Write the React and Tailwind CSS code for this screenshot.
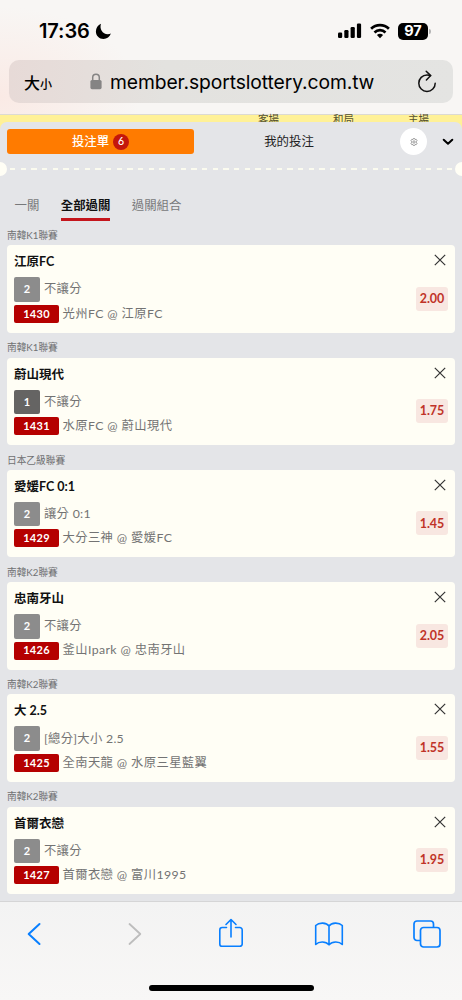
import React, { useState } from "react";

const initialBets = [
  { id: "1430", league: "南韓K1聯賽", title: "江原FC", pick: "2", type: "不讓分", match: "光州FC @ 江原FC", odds: "2.00" },
  { id: "1431", league: "南韓K1聯賽", title: "蔚山現代", pick: "1", type: "不讓分", match: "水原FC @ 蔚山現代", odds: "1.75" },
  { id: "1429", league: "日本乙級聯賽", title: "愛媛FC 0:1", pick: "2", type: "讓分 0:1", match: "大分三神 @ 愛媛FC", odds: "1.45" },
  { id: "1426", league: "南韓K2聯賽", title: "忠南牙山", pick: "2", type: "不讓分", match: "釜山Ipark @ 忠南牙山", odds: "2.05" },
  { id: "1425", league: "南韓K2聯賽", title: "大 2.5", pick: "2", type: "[總分]大小 2.5", match: "全南天龍 @ 水原三星藍翼", odds: "1.55" },
  { id: "1427", league: "南韓K2聯賽", title: "首爾衣戀", pick: "2", type: "不讓分", match: "首爾衣戀 @ 富川1995", odds: "1.95" },
];

const tabs = ["一關", "全部過關", "過關組合"];

const StatusBar = () => (
  <div className="flex h-[60px] items-center pl-[39px] pr-[31px] pt-[2px] text-black">
    <span className="w-[53px] whitespace-nowrap text-[20px] font-semibold leading-none tracking-[-0.1px]">17:36</span>
    <svg className="ml-[3px]" width="17" height="17" viewBox="0 0 17 17">
      <path d="M6 .8C4.200 5.800 7.400 11.200 12.800 11.200c1.200 0 2.200-.2 3.100-.6C14.700 14 11.900 16 8.500 16 4.200 16 .900 12.800 .900 8.500 .900 5.100 2.900 2 6 .8Z" />
    </svg>
    <div className="ml-auto flex items-center">
      <svg width="24" height="16" viewBox="0 0 24 16">
        <rect x="0" y="9.500" width="4.200" height="5.500" rx="1.200" />
        <rect x="6.300" y="7" width="4.200" height="8" rx="1.200" />
        <rect x="12.600" y="4" width="4.200" height="11" rx="1.200" />
        <rect x="18.900" y=".5" width="4.200" height="14.500" rx="1.200" />
      </svg>
      <svg className="ml-[8px]" width="20" height="16" viewBox="0 0 20 16">
        <g fill="none" stroke="#000" strokeWidth="2.700">
          <path d="M1.100 5.800a12.800 12.800 0 0 1 17.800 0" />
          <path d="M4.500 9.400a8 8 0 0 1 11 0" />
        </g>
        <path d="M10 15.200l-3.100-3.100a4.500 4.500 0 0 1 6.200 0Z" />
      </svg>
      <div className="ml-[8px] flex h-[17px] w-[30px] items-center justify-center rounded-[5px] bg-black text-[14.500px] font-bold leading-none text-white">
        97
      </div>
      <div className="ml-[1px] h-[5px] w-[2px] rounded-r-full bg-[#b5b5b5]"></div>
    </div>
  </div>
);

const AddressBar = () => (
  <div className="mx-[9px] flex h-[43px] items-center rounded-[10px] bg-linear-to-r from-[#e7dad7] via-[#e3e2df] via-35% to-[#e4e4e2] pl-[15px] pr-[16px] text-black">
    <div className="flex w-[65px] items-baseline font-['Noto_Sans_CJK_TC',sans-serif] font-medium leading-none">
      <span className="text-[16px]">大</span>
      <span className="text-[12px]">小</span>
    </div>
    <svg className="ml-[1px]" width="12" height="17" viewBox="0 0 12 17">
      <path d="M2.700 8V4.500a3.300 3.300 0 0 1 6.600 0V8" fill="none" stroke="#858484" strokeWidth="1.500" />
      <rect x=".4" y="7" width="11.200" height="9.200" rx="1.600" fill="#858484" />
    </svg>
    <span className="ml-[8px] whitespace-nowrap pt-[2px] text-[19.300px] leading-none tracking-[-0.100px]">member.sportslottery.com.tw</span>
    <svg className="ml-auto" width="20" height="24" viewBox="0 0 20 24" fill="none" stroke="#111" strokeWidth="1.500" strokeLinecap="round" strokeLinejoin="round">
      <path d="M18.200 13.200A8.200 8.200 0 1 1 10 5c1.400 0 2.600.2 3.600.7" />
      <path d="M9.200 1.300l4.500 4.300-4.300 4.400" />
    </svg>
  </div>
);

const BetCard = ({ bet, onRemove }) => (
  <section className="h-[112.300px] px-[7px]">
    <h3 className="h-[21.300px] whitespace-nowrap pt-[1px] text-[9.700px] leading-[21px] text-[#707173]">{bet.league}</h3>
    <div className="flex h-[87.400px] justify-between rounded-[4px] bg-[#fffef5] pl-[7px] pr-[7px]">
      <div className="whitespace-nowrap pt-[9px]">
        <h4 className="h-[16px] text-[12.500px] font-bold leading-[16px] text-[#111]">{bet.title}</h4>
        <div className="mt-[7px] flex h-[24.500px] items-center">
          <span
            className={`flex h-full w-[26px] items-center justify-center rounded-[2px] text-[11px] font-bold text-white ${
              bet.pick === "1" ? "bg-[#656463]" : "bg-[#8c8c8c]"
            }`}
          >
            {bet.pick}
          </span>
          <span className="ml-[4px] text-[12.300px] tracking-[0.300px] text-[#737373]">{bet.type}</span>
        </div>
        <div className="mt-[3px] flex h-[18px] items-center">
          <span className="flex h-full w-[45px] items-center justify-center rounded-[2px] bg-[#b50000] text-[11px] font-bold tracking-[0.300px] text-white">
            {bet.id}
          </span>
          <span className="ml-[3.500px] text-[12.300px] tracking-[0.400px] text-[#737373]">{bet.match}</span>
        </div>
      </div>
      <div className="flex w-[32px] flex-col items-end">
        <button className="mr-[2px] mt-[9px]" onClick={() => onRemove(bet.id)}>
          <svg width="12" height="12" viewBox="0 0 12 12" stroke="#333" strokeWidth="1.200">
            <path d="M.8 .8l10.400 10.400M11.200 .8L.8 11.200" />
          </svg>
        </button>
        <span className="mt-[20.500px] flex h-[24px] w-[32px] items-center justify-center rounded-[3px] bg-[#f8e7e1] pt-[1px] text-[12.500px] font-bold text-[#c03328]">
          {bet.odds}
        </span>
      </div>
    </div>
  </section>
);

const BottomBar = () => (
  <footer className="h-[99px] border-t border-[#d5d5d6] bg-linear-to-b from-[#f3f3f3] to-[#f8f7f6]">
    <div className="flex h-[63px] items-center pl-[27px] text-[#087fff]">
      <svg width="14" height="24" viewBox="0 0 14 24" fill="none" stroke="currentColor" strokeWidth="2" strokeLinecap="round" strokeLinejoin="round">
        <path d="M12.500 2L1.700 12l10.800 10" />
      </svg>
      <svg className="ml-[87px]" width="14" height="24" viewBox="0 0 14 24" fill="none" stroke="#bdbdbd" strokeWidth="1.800" strokeLinecap="round" strokeLinejoin="round">
        <path d="M1.500 2l10.800 10L1.500 22" />
      </svg>
      <svg className="mb-[1px] ml-[76px]" width="26" height="30" viewBox="0 0 26 30" fill="none" stroke="currentColor" strokeWidth="1.600" strokeLinecap="round" strokeLinejoin="round">
        <path d="M8.500 9.500H4.200a2.400 2.400 0 0 0-2.400 2.400v14a2.400 2.400 0 0 0 2.400 2.400h17.600a2.400 2.400 0 0 0 2.400-2.400v-14a2.400 2.400 0 0 0-2.400-2.400h-4.300" />
        <path d="M13 19V1.800M8 6.500l5-5 5 5" />
      </svg>
      <svg className="ml-[69.500px]" width="30" height="26" viewBox="0 0 30 26" fill="none" stroke="currentColor" strokeWidth="1.600" strokeLinejoin="round">
        <path d="M15 5C12.500 1.200 5 1.200 1.700 4.500v19c3.300-3.300 10-3.300 13.300.3 3.300-3.600 10-3.600 13.300-.3v-19C25 1.200 17.500 1.200 15 5ZM15 5v18.800" />
      </svg>
      <svg className="ml-[69px]" width="28" height="28" viewBox="0 0 28 28" fill="none" stroke="currentColor" strokeWidth="1.700" strokeLinejoin="round">
        <path d="M7.500 20.500H4a3 3 0 0 1-3-3V4a3 3 0 0 1 3-3h13.500a3 3 0 0 1 3 3v3.500" />
        <rect x="7.500" y="7.500" width="19.500" height="19.500" rx="3" />
      </svg>
    </div>
    <div className="mx-auto mt-[20px] h-[6px] w-[165px] rounded-full bg-black"></div>
  </footer>
);

const App = () => {
  const [bets, setBets] = useState(initialBets);
  const [activeTab, setActiveTab] = useState("全部過關");

  const removeBet = (id) => {
    setBets(bets.filter((bet) => bet.id !== id));
  };

  return (
    <div className="flex h-[1000px] w-[462px] flex-col overflow-hidden bg-[#e4e5e8] font-['Lato','Noto_Sans_CJK_TC',sans-serif]">
      <header className="h-[115px] shrink-0 border-b border-[#dcdad3] bg-[radial-gradient(ellipse_140px_90px_at_0%_85%,#faeae5,#f8f6f4)] font-['Inter',sans-serif]">
        <StatusBar />
        <AddressBar />
      </header>

      {/* odds table header, mostly covered by the bet slip panel */}
      <div className="h-[14px] shrink-0 bg-[#fff197] text-[10.500px] leading-none text-[#54502f]">
        <div className="ml-[231px] grid w-[225px] grid-cols-3 text-center">
          <span className="-mt-[1px]">客場</span>
          <span className="-mt-[1px]">和局</span>
          <span className="-mt-[1px]">主場</span>
        </div>
      </div>

      <main className="relative -mt-[7px] min-h-0 flex-1 overflow-hidden rounded-t-[7px] bg-[#e4e5e8]">
        <div className="flex h-[39px] items-center pl-[7px] pr-[8px]">
          <button className="flex h-[25px] w-[187px] items-center justify-center rounded-[3px] bg-[#ff7b00] text-[12.400px] font-medium text-white">
            <span className="pt-[1px]">投注單</span>
            <span className="ml-[4px] flex h-[16px] w-[16px] items-center justify-center rounded-full bg-[#c4170c] text-[10.500px]">6</span>
          </button>
          <button className="w-[190px] pt-[1px] text-[12.400px] text-[#222]">我的投注</button>
          <div className="ml-[16px] flex h-[27px] w-[27px] items-center justify-center rounded-full bg-white">
            <svg width="8" height="8" viewBox="0 0 8 8" fill="none" stroke="#777" strokeWidth=".7">
              <path d="M3.200 .6h1.600l.4 1 1.100-.2.8 1.400-.7.800v.8l.7.800-.8 1.400-1.100-.2-.4 1H3.200l-.4-1-1.100.2-.8-1.400.7-.8v-.8l-.7-.8.8-1.400 1.100.2Z" />
              <circle cx="4" cy="4" r="1.200" />
            </svg>
          </div>
          <svg className="ml-auto" width="12" height="8" viewBox="0 0 12 8" fill="none" stroke="#000" strokeWidth="2" strokeLinecap="round" strokeLinejoin="round">
            <path d="M1.700 1.700L6 5.800l4.300-4.100" />
          </svg>
        </div>

        <div className="flex h-[15px] items-center justify-between">
          <div className="h-[14px] w-[7px] rounded-r-full bg-[#fffef5]"></div>
          <div className="mt-[1px] h-[2px] w-[442px] bg-[repeating-linear-gradient(to_right,#fbfbef_0px,#fbfbef_5.3px,transparent_5.3px,transparent_10.67px)]"></div>
          <div className="h-[14px] w-[7px] rounded-l-full bg-[#fffef5]"></div>
        </div>

        <nav className="flex h-[48px] items-start gap-[21.500px] pl-[14.500px] pt-[20px] text-[12.400px]">
          {tabs.map((tab) => (
            <button
              key={tab}
              onClick={() => setActiveTab(tab)}
              className={
                tab === activeTab
                  ? "h-[25px] border-b-[3px] border-[#c4151c] pb-[3px] font-bold leading-[19px] text-[#111]"
                  : "h-[19px] leading-[19px] text-[#77787a]"
              }
            >
              {tab}
            </button>
          ))}
        </nav>

        {bets.map((bet) => (
          <BetCard key={bet.id} bet={bet} onRemove={removeBet} />
        ))}
      </main>

      <BottomBar />
    </div>
  );
};

export default App;
